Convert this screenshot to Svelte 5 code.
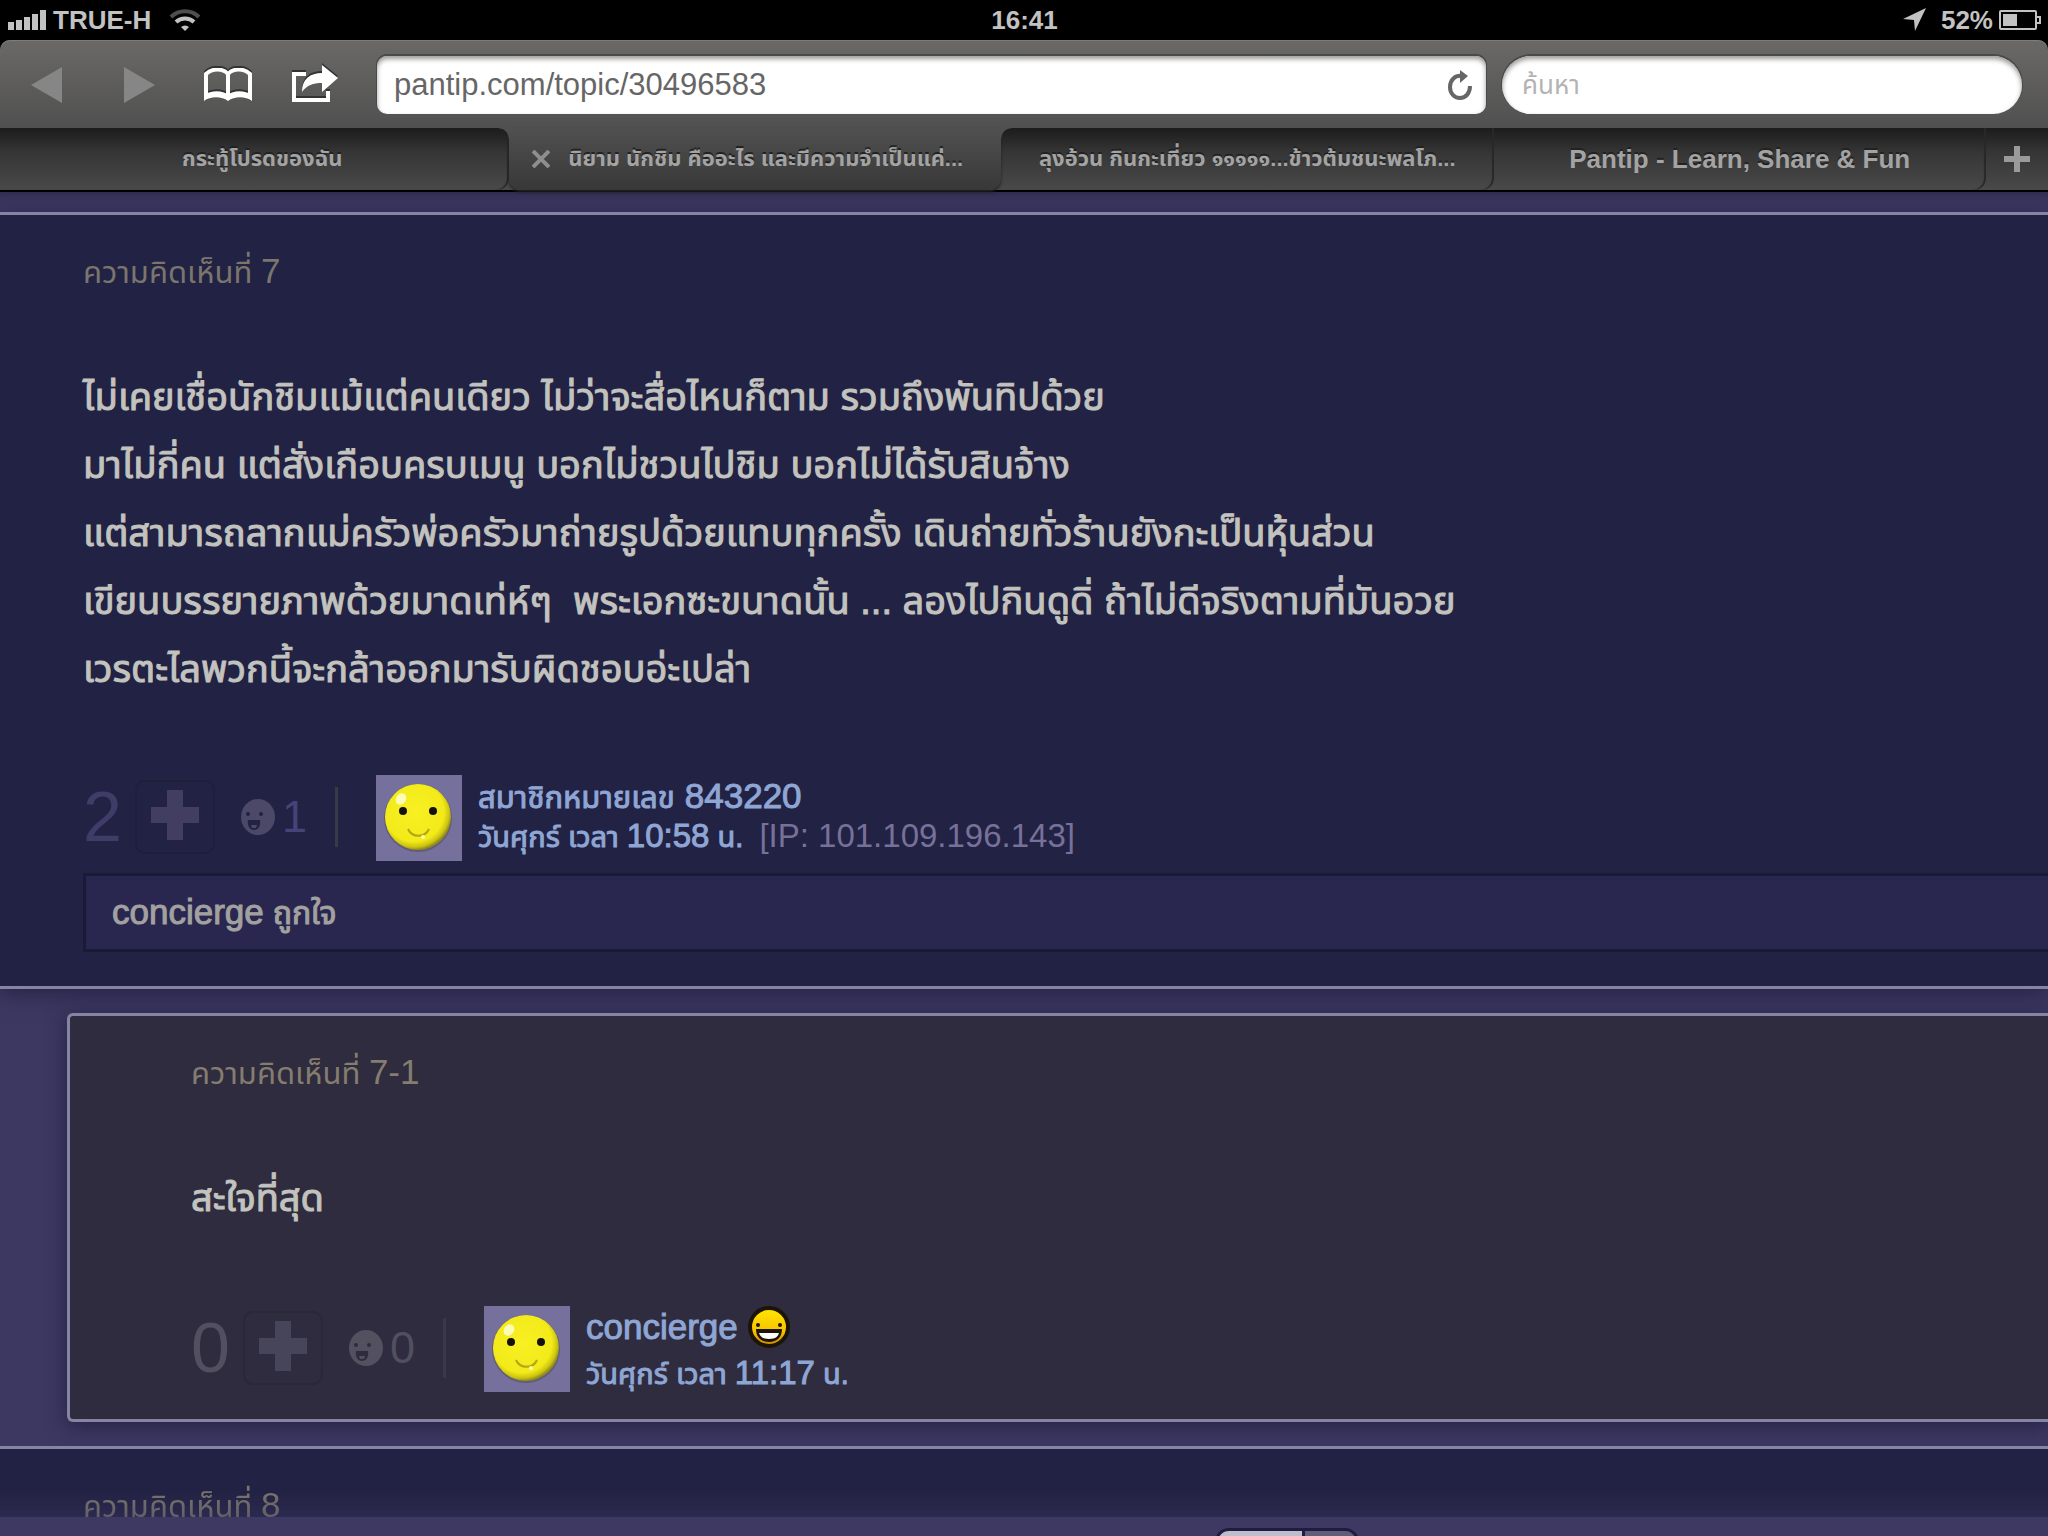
<script lang="ts">
  type Tab = { title: string; active?: boolean; latin?: boolean };

  const tabs: Tab[] = [
    { title: 'กระทู้โปรดของฉัน' },
    { title: 'นิยาม นักชิม คืออะไร และมีความจำเป็นแค่...', active: true },
    { title: 'ลุงอ้วน กินกะเที่ยว ๑๑๑๑๑...ข้าวต้มชนะพลโภ...' },
    { title: 'Pantip - Learn, Share & Fun', latin: true }
  ];

  const lines = [
    'ไม่เคยเชื่อนักชิมแม้แต่คนเดียว ไม่ว่าจะสื่อไหนก็ตาม รวมถึงพันทิปด้วย',
    'มาไม่กี่คน แต่สั่งเกือบครบเมนู บอกไม่ชวนไปชิม บอกไม่ได้รับสินจ้าง',
    'แต่สามารถลากแม่ครัวพ่อครัวมาถ่ายรูปด้วยแทบทุกครั้ง เดินถ่ายทั่วร้านยังกะเป็นหุ้นส่วน',
    'เขียนบรรยายภาพด้วยมาดเท่ห์ๆ\u00a0 พระเอกซะขนาดนั้น ... ลองไปกินดูดิ่ ถ้าไม่ดีจริงตามที่มันอวย',
    'เวรตะไลพวกนี้จะกล้าออกมารับผิดชอบอ่ะเปล่า'
  ];

  let url = $state('pantip.com/topic/30496583');
  let query = $state('');
</script>

{#snippet votes(score: number, emotions: number)}
  <div class="votes">
    <span class="score">{score}</span>
    <button class="vote" aria-label="โหวต">
      <svg width="48" height="50" viewBox="0 0 48 50"><path d="M16 0h16v17h16v16H32v17H16V33H0V17h16z" fill="currentColor" /></svg>
    </button>
    <button class="emotion" aria-label="แสดงความรู้สึก">
      <svg width="36" height="38" viewBox="0 0 36 38">
        <ellipse cx="18" cy="19" rx="17" ry="18" fill="currentColor" />
        <circle cx="8" cy="16" r="2" class="ink" />
        <circle cx="21" cy="16" r="2" class="ink" />
        <path d="M8 22h12c1 6-2 10-6 10s-7-4-6-10z" class="ink" />
        <path d="M11 27h6l-1 3h-4z" fill="currentColor" />
      </svg>
      <span>{emotions}</span>
    </button>
    <span class="rule"></span>
  </div>
{/snippet}

{#snippet avatar()}
  <svg class="avatar" viewBox="0 0 86 86" role="img" aria-label="avatar">
    <defs>
      <radialGradient id="ball" cx="44%" cy="42%" r="58%">
        <stop offset="0" stop-color="#f8f022" />
        <stop offset="0.78" stop-color="#f3ea1a" />
        <stop offset="0.92" stop-color="#cdc411" />
        <stop offset="1" stop-color="#8f8a1c" />
      </radialGradient>
    </defs>
    <rect width="86" height="86" fill="#76719c" />
    <circle cx="42" cy="43" r="34" fill="#4f4a58" opacity="0.5" />
    <circle cx="42" cy="42" r="33" fill="url(#ball)" />
    <ellipse cx="25" cy="24" rx="5" ry="6" fill="#fdfbb8" transform="rotate(35 25 24)" />
    <circle cx="27" cy="36" r="4" fill="#14120a" />
    <circle cx="57" cy="36" r="4" fill="#14120a" />
    <path d="M32 54c4 9 17 9 21 0" fill="none" stroke="#b3a612" stroke-width="2" />
    <circle cx="47" cy="62" r="2" fill="#fdf9a0" />
  </svg>
{/snippet}

<div class="screen">
  <header>
    <div class="status">
      <div class="carrier">
        <svg width="39" height="20" viewBox="0 0 39 20" fill="currentColor">
          <path d="M0 12h6v8H0zM8 10h6v10H8zM16 7h6v13h-6zM24 4h6v16h-6zM32 0h6v20h-6z" />
        </svg>
        <span>TRUE-H</span>
        <svg class="wifi" width="32" height="24" viewBox="0 0 32 24" fill="none" stroke="currentColor" stroke-width="4">
          <path d="M2 9a20 20 0 0 1 28 0" opacity="0.4" />
          <path d="M7 14a13 13 0 0 1 18 0" />
          <path d="M16 23l-4-4a6 6 0 0 1 8 0z" fill="currentColor" stroke="none" />
        </svg>
      </div>
      <time>16:41</time>
      <div class="power">
        <svg width="24" height="24" viewBox="0 0 24 24" fill="currentColor"><path d="M23 0 12 23 11 12 0 11z" /></svg>
        <span>52%</span>
        <svg width="42" height="20" viewBox="0 0 42 20">
          <rect x="1" y="1" width="36" height="18" rx="1" fill="none" stroke="currentColor" stroke-width="2" />
          <rect x="4" y="4" width="14" height="12" fill="currentColor" />
          <path d="M38 7h3v6h-3" fill="none" stroke="currentColor" stroke-width="2" />
        </svg>
      </div>
    </div>

    <nav class="toolbar">
      <button class="arrow" aria-label="Back"><svg width="31" height="36" viewBox="0 0 31 36"><path d="M31 0v36L0 18z" fill="#868686" /></svg></button>
      <button class="arrow" aria-label="Forward"><svg width="31" height="36" viewBox="0 0 31 36"><path d="M0 0v36l31-18z" fill="#868686" /></svg></button>
      <button class="book" aria-label="Bookmarks">
        <svg width="48" height="34" viewBox="0 0 48 34">
          <path d="M2 28V6C8 0 19 0 24 6 29 0 40 0 46 6v22M24 6v22" fill="none" stroke="#fff" stroke-width="4" />
          <path d="M0 33v-6c7-5 19-5 24 0 5-5 17-5 24 0v6c-6-5-18-5-24 0-6-5-18-5-24 0z" fill="#fff" />
        </svg>
      </button>
      <button class="share" aria-label="Share">
        <svg width="46" height="38" viewBox="0 0 46 38">
          <path d="M14 10H2v26h34V27" fill="none" stroke="#fff" stroke-width="4" />
          <path d="M10 28C10 15 18 9 30 9V1l16 13-16 14v-9c-9 0-15 2-20 9z" fill="#fff" />
        </svg>
      </button>
      <div class="address">
        <input type="text" aria-label="Address" bind:value={url} />
        <button aria-label="Reload">
          <svg width="26" height="30" viewBox="0 0 26 30">
            <path d="M14 6C7 5 2 10 2 17c0 6 4 11 10 11s10-5 10-12" fill="none" stroke="#666" stroke-width="4" />
            <path d="M12 0l8 6-8 7z" fill="#666" />
          </svg>
        </button>
      </div>
      <input class="search" type="search" aria-label="ค้นหา" placeholder="ค้นหา" bind:value={query} />
    </nav>

    <div class="tabs">
      {#each tabs as tab}
        <div class="tab" class:active={tab.active}>
          {#if tab.active}
            <button class="close" aria-label="Close tab">
              <svg width="18" height="18" viewBox="0 0 18 18"><path d="M1 1l16 16M17 1 1 17" stroke="currentColor" stroke-width="4" /></svg>
            </button>
          {/if}
          <button class="title" class:latin={tab.latin}>{tab.title}</button>
        </div>
      {/each}
      <button class="add" aria-label="New tab">
        <svg width="26" height="26" viewBox="0 0 26 26"><path d="M13 0v26M0 13h26" stroke="currentColor" stroke-width="6" /></svg>
      </button>
    </div>
  </header>

  <main>
    <article class="comment">
      <h2>ความคิดเห็นที่ <b>7</b></h2>
      <div class="body">
        {#each lines as line}
          <p>{line}</p>
        {/each}
      </div>
      <footer>
        {@render votes(2, 1)}
        {@render avatar()}
        <div class="author">
          <a href="#843220">สมาชิกหมายเลข <b>843220</b></a>
          <div class="posted">วันศุกร์ เวลา <b>10:58</b> น. <span class="ip">[IP: 101.109.196.143]</span></div>
        </div>
      </footer>
      <div class="likes"><b>concierge</b> ถูกใจ</div>
    </article>

    <article class="comment reply">
      <h2>ความคิดเห็นที่ <b>7-1</b></h2>
      <div class="body"><p>สะใจที่สุด</p></div>
      <footer>
        {@render votes(0, 0)}
        {@render avatar()}
        <div class="author">
          <a href="#concierge">
            <b>concierge</b>
            <svg width="42" height="42" viewBox="0 0 42 42">
              <defs>
                <linearGradient id="grin" x1="0" y1="0" x2="0" y2="1">
                  <stop offset="0" stop-color="#ffe600" />
                  <stop offset="0.6" stop-color="#f8c400" />
                  <stop offset="1" stop-color="#c98600" />
                </linearGradient>
              </defs>
              <circle cx="21" cy="21" r="19" fill="url(#grin)" stroke="#1c1405" stroke-width="4" />
              <circle cx="10" cy="19" r="2" fill="#1c1405" />
              <circle cx="32" cy="19" r="2" fill="#1c1405" />
              <path d="M8 23h26c0 8-5 13-13 13S8 31 8 23z" fill="#1c1405" />
              <path d="M11 27h20c-1 3-3 6-10 6s-9-3-10-6z" fill="#fff" />
            </svg>
          </a>
          <div class="posted">วันศุกร์ เวลา <b>11:17</b> น.</div>
        </div>
      </footer>
    </article>

    <article class="comment next">
      <h2>ความคิดเห็นที่ <b>8</b></h2>
    </article>
  </main>

  <div class="dock">
    <div class="pill"><span></span><span></span></div>
  </div>
</div>

<style>
  :global(body) {
    margin: 0;
    background: #3c3861;
  }
  .screen {
    height: 100vh;
    display: flex;
    flex-direction: column;
    overflow: hidden;
    background: #3c3861;
    font-family: 'Liberation Sans', 'Noto Sans Thai', Loma, Garuda, sans-serif;
  }
  button,
  input {
    font: inherit;
    border: 0;
    padding: 0;
    margin: 0;
    background: none;
    color: inherit;
    outline: 0;
  }
  button {
    display: flex;
    align-items: center;
    justify-content: center;
  }
  svg {
    display: block;
    flex: none;
  }
  b {
    font-weight: 400;
  }

  header {
    flex: none;
    background: #000;
  }
  .status {
    height: 40px;
    display: grid;
    grid-template-columns: 1fr auto 1fr;
    align-items: center;
    padding: 0 7px 0 8px;
    font-size: 26px;
    font-weight: 700;
    color: #c2c2c2;
  }
  .carrier,
  .power {
    display: flex;
    align-items: center;
    gap: 6px;
  }
  .carrier .wifi {
    margin-left: 12px;
  }
  .power {
    justify-content: flex-end;
  }
  .power span {
    margin-left: 8px;
  }

  .toolbar {
    height: 88px;
    box-sizing: border-box;
    display: flex;
    align-items: center;
    padding: 2px 26px 0 31px;
    border-radius: 10px 10px 0 0;
    background: linear-gradient(#6a6967, #505050);
    box-shadow: inset 0 1px 0 #7c7c7a;
  }
  .arrow {
    margin-right: 62px;
  }
  .arrow + .arrow {
    margin-right: 49px;
  }
  .book {
    margin-right: 40px;
  }
  .share {
    margin-right: 39px;
    padding-bottom: 4px;
  }
  .book svg,
  .share svg {
    filter: drop-shadow(0 -2px 0 #333);
  }
  .address {
    flex: 1;
    height: 58px;
    display: flex;
    align-items: center;
    padding: 0 12px 0 17px;
    border-radius: 10px;
    background: #fff;
    box-shadow: inset 0 3px 5px #999, 0 -1px 0 1px #4a4a4a;
    color: #666;
    font-size: 31px;
  }
  .address input {
    flex: 1;
    min-width: 0;
  }
  .search {
    width: 520px;
    height: 58px;
    box-sizing: border-box;
    margin-left: 16px;
    padding: 0 20px;
    border-radius: 29px;
    background: #fff;
    box-shadow: inset 0 3px 5px #999, 0 -1px 0 1px #4a4a4a;
    color: #666;
    font-size: 26px;
  }
  .search::placeholder {
    color: #b3b3b3;
  }

  .tabs {
    height: 62px;
    display: flex;
    margin-bottom: 2px;
    background: linear-gradient(#1c1c1c, #363636 40%, #494949);
    color: #a3a3a3;
    font-size: 26px;
    font-weight: 700;
    text-shadow: 0 -2px 0 #222;
  }
  .tab {
    flex: 1;
    min-width: 0;
    display: flex;
    align-items: center;
    justify-content: center;
    position: relative;
    border-radius: 10px 0 12px 0;
    box-shadow: inset -2px 0 1px #282828;
  }
  .tab:first-child {
    padding-left: 16px;
  }
  .title {
    white-space: nowrap;
    text-shadow: inherit;
    font-size: 22px;
  }
  .title.latin {
    font-size: 26px;
  }
  .active {
    gap: 18px;
    border-radius: 0 0 12px 12px;
    background: linear-gradient(#505050, #383838);
    box-shadow: 0 2px 3px #222;
  }
  .active .title {
    padding-right: 14px;
  }
  .active::before,
  .active::after {
    content: '';
    position: absolute;
    top: 0;
    width: 10px;
    height: 10px;
  }
  .active::before {
    left: -10px;
    background: radial-gradient(circle at 0 100%, transparent 9px, #505050 10px);
  }
  .active::after {
    right: -10px;
    background: radial-gradient(circle at 100% 100%, transparent 9px, #505050 10px);
  }
  .close {
    color: #8e8e8e;
  }
  .add {
    width: 62px;
    color: #9a9a9a;
  }

  main {
    flex: 1;
    min-height: 0;
    overflow: hidden;
    padding-top: 20px;
    box-shadow: inset 0 12px 10px -10px #2b2848;
  }
  .comment {
    padding: 33px 0 34px 83px;
    border: solid #8683a5;
    border-width: 3px 0;
    background: #222244;
    box-shadow: 0 4px 20px #252244;
    color: #c2c2be;
  }
  h2 {
    margin: 0;
    font-size: 31px;
    line-height: 46px;
    font-weight: 400;
    color: #7a756d;
  }
  h2 b,
  .author b,
  .likes b {
    font-size: 35px;
  }
  .body {
    padding: 67px 0 72px;
    font-size: 38px;
    -webkit-text-stroke: 1px;
  }
  .body p {
    margin: 0;
    line-height: 68px;
    white-space: nowrap;
  }
  footer {
    display: flex;
    align-items: center;
    height: 86px;
    color: #403c68;
  }
  .votes {
    display: flex;
    align-items: center;
    padding-bottom: 3px;
  }
  .score {
    width: 52px;
    font-size: 70px;
    line-height: 70px;
  }
  .vote {
    width: 80px;
    height: 74px;
    border: 2px solid #1f1f3c;
    border-radius: 10px;
    color: #413e60;
    padding-bottom: 4px;
  }
  .emotion {
    gap: 6px;
    margin-left: 25px;
    font-size: 45px;
    line-height: 50px;
    color: #4b4967;
  }
  .emotion span {
    color: #46427a;
  }
  .ink {
    fill: #222244;
  }
  .rule {
    width: 3px;
    height: 60px;
    margin: 0 38px 0 28px;
    background: #3a3948;
  }
  .avatar {
    width: 86px;
    height: 86px;
  }
  .author {
    margin-left: 16px;
    padding-bottom: 4px;
    font-size: 31px;
    line-height: 38px;
    color: #8fa6d4;
    white-space: nowrap;
    -webkit-text-stroke: 1px;
  }
  .author a {
    display: flex;
    align-items: baseline;
    gap: 10px;
    color: inherit;
    text-decoration: none;
  }
  .posted {
    font-size: 29px;
  }
  .author .posted b {
    font-size: 33px;
  }
  .ip {
    margin-left: 8px;
    font-size: 33px;
    color: #77719a;
    -webkit-text-stroke: 0;
  }
  .likes {
    margin-top: 12px;
    padding-left: 26px;
    border: 3px solid #191938;
    border-right: 0;
    background: #29274f;
    font-size: 32px;
    line-height: 72px;
    color: #a2a19f;
    -webkit-text-stroke: 1px;
  }
  .reply {
    margin: 24px 0 24px 67px;
    padding: 33px 0 27px 121px;
    border-width: 3px 0 3px 3px;
    border-radius: 6px 0 0 6px;
    background: #2e2c3e;
  }
  .reply .body {
    padding-bottom: 74px;
  }
  .reply h2 {
    color: #857d70;
  }
  .reply footer,
  .reply .emotion span {
    color: #514f60;
  }
  .reply .vote {
    border-color: #292838;
    color: #474559;
  }
  .reply .emotion {
    color: #53515f;
  }
  .reply .ink {
    fill: #2e2c3e;
  }
  .reply .author {
    padding: 3px 0 0;
    color: #8fa6d4;
    line-height: 46px;
  }
  .reply .author a {
    align-items: center;
  }
  .next {
    -webkit-mask-image: linear-gradient(#000 44px, rgba(0, 0, 0, 0.6) 74px);
    mask-image: linear-gradient(#000 44px, rgba(0, 0, 0, 0.6) 74px);
  }

  .dock {
    flex: none;
    height: 19px;
    display: flex;
    justify-content: center;
    background: #3e3963;
  }
  .pill {
    display: flex;
    width: 138px;
    height: 40px;
    margin: 11px 0 0 526px;
    border: 3px solid #1f1c40;
    border-radius: 14px;
    overflow: hidden;
  }
  .pill span {
    flex: 1;
    background: #615c78;
  }
  .pill span:first-child {
    flex: none;
    width: 84px;
    border-right: 3px solid #1f1c40;
    background: #bfbccd;
  }
</style>
